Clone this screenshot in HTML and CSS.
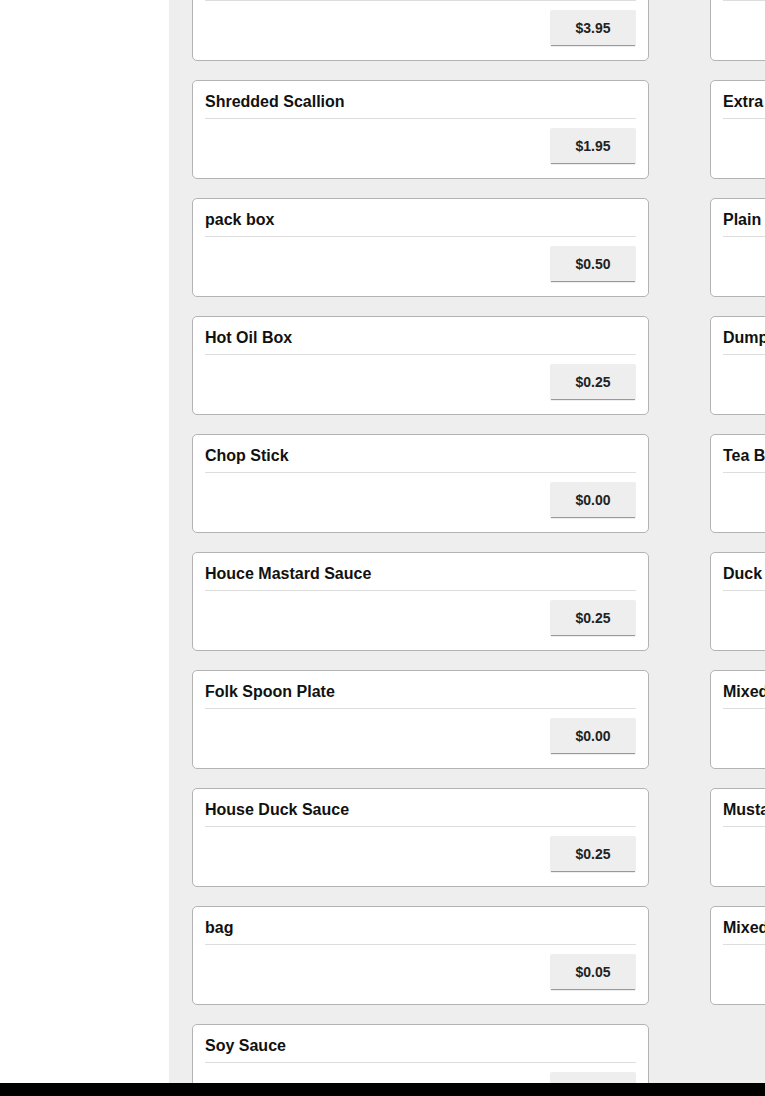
FILE: index.html
```html
<!DOCTYPE html>
<html>
<head>
<meta charset="utf-8">
<link rel="stylesheet" href="styles.css">
</head>
<body>
<div class="layout">
  <aside class="sidebar"></aside>
  <main class="main">
    <div class="grid">
      <div class="card"><div class="card-title">Extra Pancake</div><div class="card-body"><button class="price">$3.95</button></div></div>
      <div class="card"><div class="card-title">Extra Rice</div><div class="card-body"><button class="price">$1.50</button></div></div>
      <div class="card"><div class="card-title">Shredded Scallion</div><div class="card-body"><button class="price">$1.95</button></div></div>
      <div class="card"><div class="card-title">Extra Sauce</div><div class="card-body"><button class="price">$0.50</button></div></div>
      <div class="card"><div class="card-title">pack box</div><div class="card-body"><button class="price">$0.50</button></div></div>
      <div class="card"><div class="card-title">Plain Rice</div><div class="card-body"><button class="price">$1.50</button></div></div>
      <div class="card"><div class="card-title">Hot Oil Box</div><div class="card-body"><button class="price">$0.25</button></div></div>
      <div class="card"><div class="card-title">Dumpling Sauce</div><div class="card-body"><button class="price">$0.25</button></div></div>
      <div class="card"><div class="card-title">Chop Stick</div><div class="card-body"><button class="price">$0.00</button></div></div>
      <div class="card"><div class="card-title">Tea Bag</div><div class="card-body"><button class="price">$0.00</button></div></div>
      <div class="card"><div class="card-title">Houce Mastard Sauce</div><div class="card-body"><button class="price">$0.25</button></div></div>
      <div class="card"><div class="card-title">Duck Sauce</div><div class="card-body"><button class="price">$0.25</button></div></div>
      <div class="card"><div class="card-title">Folk Spoon Plate</div><div class="card-body"><button class="price">$0.00</button></div></div>
      <div class="card"><div class="card-title">Mixed Vegetable</div><div class="card-body"><button class="price">$2.50</button></div></div>
      <div class="card"><div class="card-title">House Duck Sauce</div><div class="card-body"><button class="price">$0.25</button></div></div>
      <div class="card"><div class="card-title">Mustard Sauce</div><div class="card-body"><button class="price">$0.25</button></div></div>
      <div class="card"><div class="card-title">bag</div><div class="card-body"><button class="price">$0.05</button></div></div>
      <div class="card"><div class="card-title">Mixed Sauce</div><div class="card-body"><button class="price">$0.50</button></div></div>
      <div class="card"><div class="card-title">Soy Sauce</div><div class="card-body"><button class="price">$0.25</button></div></div>
    </div>
  </main>
</div>
<div class="footer-bar"></div>
</body>
</html>
```

FILE: styles.css
```css
html, body {
  margin: 0;
  padding: 0;
  height: 100%;
  overflow: hidden;
  font-family: "Liberation Sans", Arial, sans-serif;
}

.layout {
  display: flex;
  height: 100%;
}

.sidebar {
  flex: 0 0 169px;
  background: #ffffff;
}

.main {
  flex: 1 1 auto;
  background: #eeeeee;
  padding-left: 23px;
  overflow: hidden;
  min-width: 0;
}

.grid {
  display: grid;
  grid-template-columns: 457px 457px;
  column-gap: 61px;
  row-gap: 19px;
  margin-top: -38px;
}

.card {
  background: #ffffff;
  border: 1px solid #b3b3b3;
  border-radius: 5px;
  padding: 12px 12px 14px;
  box-sizing: border-box;
  height: 99px;
}

.card-title {
  font-size: 16px;
  font-weight: bold;
  color: #111111;
  line-height: 18px;
  padding-bottom: 7px;
  border-bottom: 1px solid #dddddd;
  white-space: nowrap;
}

.card-body {
  display: flex;
  justify-content: flex-end;
  padding-top: 9px;
  padding-right: 1px;
}

.price {
  width: 84px;
  height: 35px;
  border: none;
  border-radius: 0;
  background: #eeeeee;
  box-shadow: 0 1px 1px #999999;
  font-family: "Liberation Sans", Arial, sans-serif;
  font-size: 14px;
  font-weight: bold;
  color: #222222;
  padding: 0;
}

.footer-bar {
  position: fixed;
  left: 0;
  right: 0;
  bottom: 0;
  height: 13px;
  background: #000000;
}
```
